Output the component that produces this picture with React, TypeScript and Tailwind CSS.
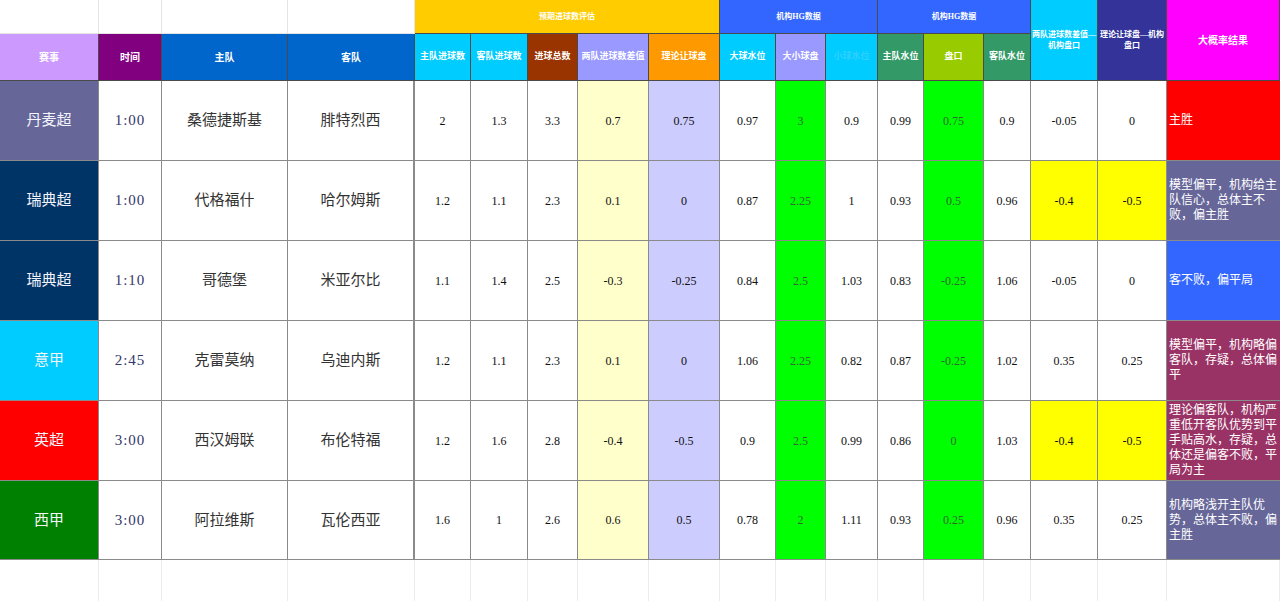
import React from "react";

type Match = {
  league: string;
  leagueBg: string;
  time: string;
  home: string;
  away: string;
  values: string[];
  flagged: boolean;
  result: string;
  resultBg: string;
};

const matches: Match[] = [
  {
    league: "丹麦超",
    leagueBg: "bg-[#666699]",
    time: "1:00",
    home: "桑德捷斯基",
    away: "腓特烈西",
    values: ["2", "1.3", "3.3", "0.7", "0.75", "0.97", "3", "0.9", "0.99", "0.75", "0.9", "-0.05", "0"],
    flagged: false,
    result: "主胜",
    resultBg: "bg-[#ff0000]",
  },
  {
    league: "瑞典超",
    leagueBg: "bg-[#003366]",
    time: "1:00",
    home: "代格福什",
    away: "哈尔姆斯",
    values: ["1.2", "1.1", "2.3", "0.1", "0", "0.87", "2.25", "1", "0.93", "0.5", "0.96", "-0.4", "-0.5"],
    flagged: true,
    result: "模型偏平，机构给主队信心，总体主不败，偏主胜",
    resultBg: "bg-[#666699]",
  },
  {
    league: "瑞典超",
    leagueBg: "bg-[#003366]",
    time: "1:10",
    home: "哥德堡",
    away: "米亚尔比",
    values: ["1.1", "1.4", "2.5", "-0.3", "-0.25", "0.84", "2.5", "1.03", "0.83", "-0.25", "1.06", "-0.05", "0"],
    flagged: false,
    result: "客不败，偏平局",
    resultBg: "bg-[#3366ff]",
  },
  {
    league: "意甲",
    leagueBg: "bg-[#00ccff]",
    time: "2:45",
    home: "克雷莫纳",
    away: "乌迪内斯",
    values: ["1.2", "1.1", "2.3", "0.1", "0", "1.06", "2.25", "0.82", "0.87", "-0.25", "1.02", "0.35", "0.25"],
    flagged: false,
    result: "模型偏平，机构略偏客队，存疑，总体偏平",
    resultBg: "bg-[#993366]",
  },
  {
    league: "英超",
    leagueBg: "bg-[#ff0000]",
    time: "3:00",
    home: "西汉姆联",
    away: "布伦特福",
    values: ["1.2", "1.6", "2.8", "-0.4", "-0.5", "0.9", "2.5", "0.99", "0.86", "0", "1.03", "-0.4", "-0.5"],
    flagged: true,
    result: "理论偏客队，机构严重低开客队优势到平手贴高水，存疑，总体还是偏客不败，平局为主",
    resultBg: "bg-[#993366]",
  },
  {
    league: "西甲",
    leagueBg: "bg-[#008000]",
    time: "3:00",
    home: "阿拉维斯",
    away: "瓦伦西亚",
    values: ["1.6", "1", "2.6", "0.6", "0.5", "0.78", "2", "1.11", "0.93", "0.25", "0.96", "0.35", "0.25"],
    flagged: false,
    result: "机构略浅开主队优势，总体主不败，偏主胜",
    resultBg: "bg-[#666699]",
  },
];

// fills for the first 11 number columns; the last two turn yellow on flagged rows
const valueCols = [
  "bg-white text-[#111]",
  "bg-white text-[#111]",
  "bg-white text-[#111]",
  "bg-[#ffffcc] text-[#111]",
  "bg-[#ccccff] text-[#111]",
  "bg-white text-[#111]",
  "bg-[#00ff00] text-[#2f6a2f]",
  "bg-white text-[#111]",
  "bg-white text-[#111]",
  "bg-[#00ff00] text-[#2f6a2f]",
  "bg-white text-[#111]",
];

const subHeaders = [
  { label: "主队进球数", cls: "bg-[#00ccff] text-white" },
  { label: "客队进球数", cls: "bg-[#00ccff] text-white" },
  { label: "进球总数", cls: "bg-[#993300] text-white" },
  { label: "两队进球数差值", cls: "bg-[#9999ff] text-white" },
  { label: "理论让球盘", cls: "bg-[#ff9900] text-white" },
  { label: "大球水位", cls: "bg-[#00ccff] text-white" },
  { label: "大小球盘", cls: "bg-[#9999ff] text-white" },
  { label: "小球水位", cls: "bg-[#00ccff] text-[#2fd0ff]" },
  { label: "主队水位", cls: "bg-[#339966] text-white" },
  { label: "盘口", cls: "bg-[#99cc00] text-white" },
  { label: "客队水位", cls: "bg-[#339966] text-white" },
];

const cell = "flex items-center justify-center border-r border-b";
const dataCell = `${cell} border-[#8a8a8a]`;
const headCell = `${cell} border-[#4a4a4a] font-bold`;

export default function App() {
  return (
    <div className="w-[1280px] h-[601px] overflow-hidden bg-white font-['Liberation_Serif','Noto_Sans_CJK_SC',serif]">
      <div className="grid grid-cols-[99px_63px_126px_127px_56px_57px_50px_71px_71px_56px_50px_52px_46px_60px_47px_67px_69px_113px] grid-rows-[34px_47px_80px_80px_80px_80px_80px_79px_41px]">
        {/* group row */}
        <div className="border-r border-b border-[#e4e4e4]" />
        <div className="border-r border-b border-[#e4e4e4]" />
        <div className="border-r border-b border-[#e4e4e4]" />
        <div className="border-r border-b border-[#e4e4e4]" />
        <div className={`${headCell} col-span-5 bg-[#ffcc00] text-white text-[8px]`}>预期进球数评估</div>
        <div className={`${headCell} col-span-3 bg-[#3366ff] text-white text-[8px]`}>机构HG数据</div>
        <div className={`${headCell} col-span-3 bg-[#3366ff] text-white text-[8px]`}>机构HG数据</div>
        <div className={`${headCell} row-span-2 bg-[#00ccff] text-white text-[8px] leading-[11px] text-center px-[1px]`}>
          两队进球数差值—机构盘口
        </div>
        <div className={`${headCell} row-span-2 bg-[#333399] text-white text-[8px] leading-[11px] text-center px-[1px]`}>
          理论让球盘—机构盘口
        </div>
        <div className={`${headCell} row-span-2 bg-[#ff00ff] text-white text-[10px]`}>大概率结果</div>

        {/* column headers */}
        <div className={`${headCell} bg-[#cc99ff] text-white text-[10px]`}>赛事</div>
        <div className={`${headCell} bg-[#800080] text-white text-[10px]`}>时间</div>
        <div className={`${headCell} bg-[#0066cc] text-white text-[10px]`}>主队</div>
        <div className={`${headCell} bg-[#0066cc] text-white text-[10px]`}>客队</div>
        {subHeaders.map((h, i) => (
          <div key={i} className={`${headCell} ${h.cls} text-[9px]`}>
            {h.label}
          </div>
        ))}

        {/* matches */}
        {matches.map((m, r) => (
          <React.Fragment key={r}>
            <div className={`${dataCell} ${m.leagueBg} text-[15px] text-[#f4f4fa]`}>{m.league}</div>
            <div className={`${dataCell} text-[15px] tracking-[1px] text-[#33366a]`}>{m.time}</div>
            <div className={`${dataCell} text-[15px] text-[#333]`}>{m.home}</div>
            <div className={`${dataCell} border-r-2 text-[15px] text-[#333]`}>{m.away}</div>
            {m.values.map((v, i) => {
              const fill =
                i < 11 ? valueCols[i] : m.flagged ? "bg-[#ffff00] text-[#111]" : "bg-white text-[#111]";
              return (
                <div key={i} className={`${dataCell} ${fill} text-[12px]`}>
                  {v}
                </div>
              );
            })}
            <div
              className={`flex items-center border-b border-[#8a8a8a] ${m.resultBg} pl-[2px] text-[12px] leading-[15px] text-white`}
            >
              <span>{m.result}</span>
            </div>
          </React.Fragment>
        ))}

        {/* empty sheet row */}
        {Array.from({ length: 18 }).map((_, i) => (
          <div key={i} className="border-r border-[#ececec]" />
        ))}
      </div>
    </div>
  );
}
